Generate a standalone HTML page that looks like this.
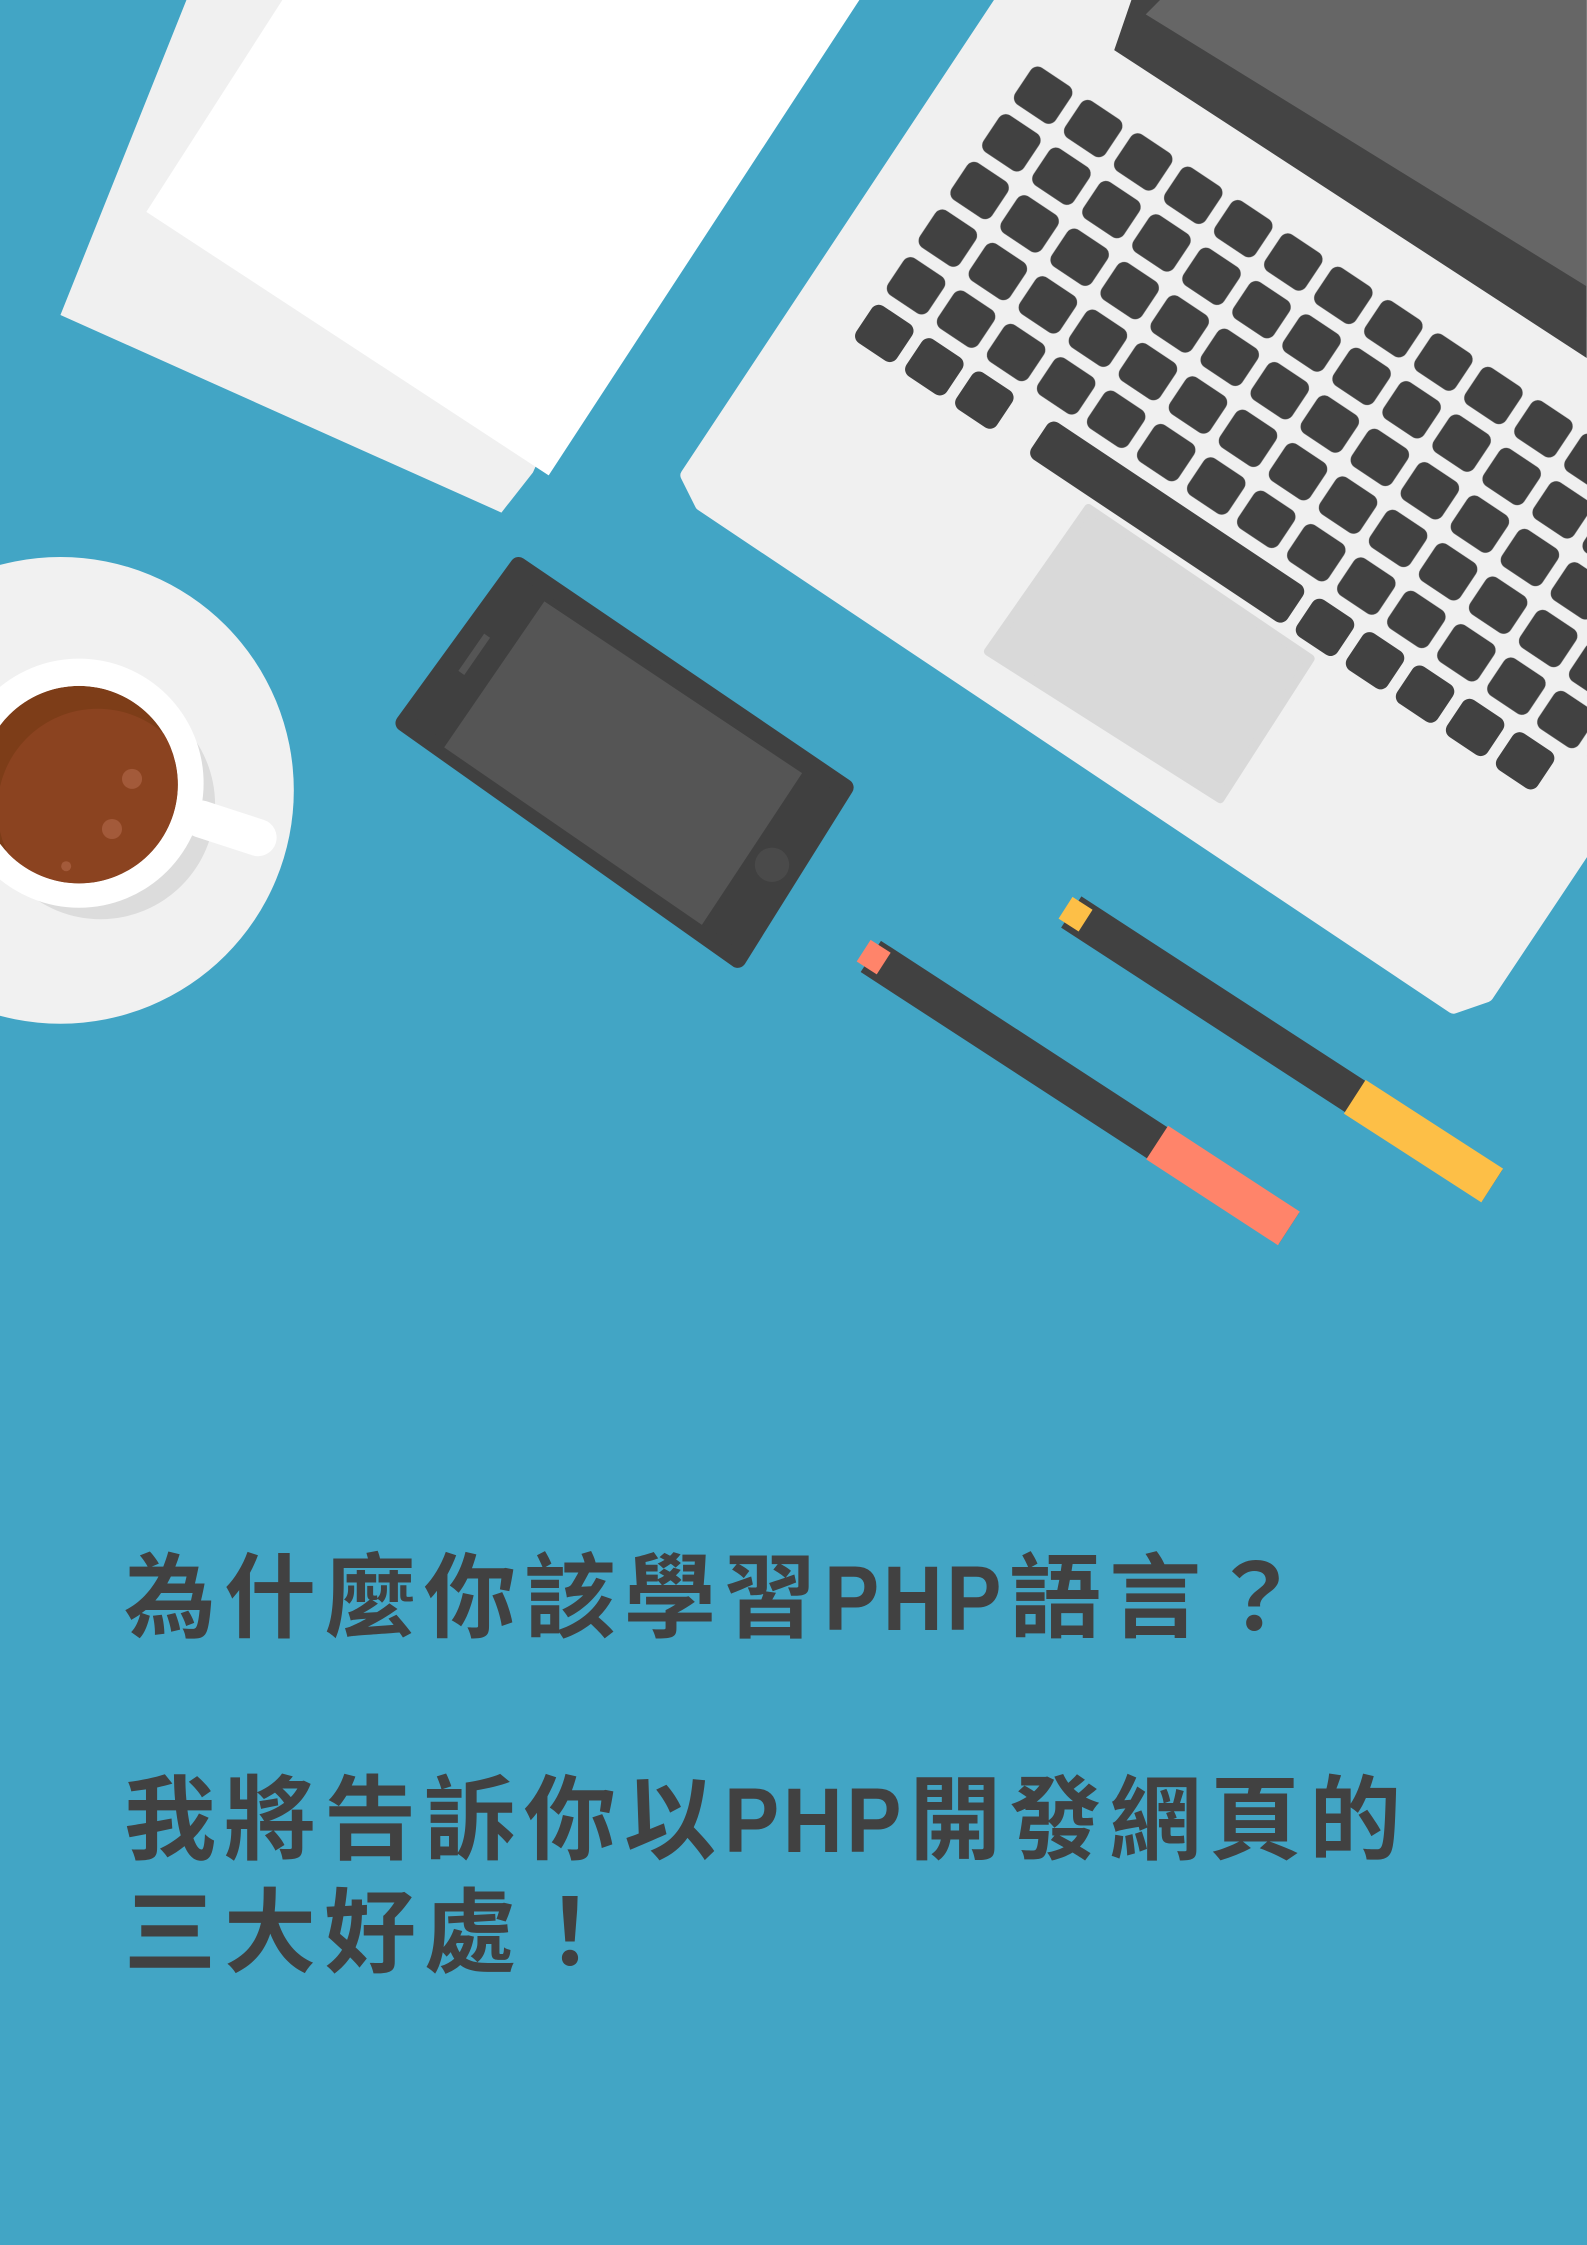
<!DOCTYPE html>
<html><head><meta charset="utf-8">
<style>
html,body{margin:0;padding:0;}
body{width:1587px;height:2245px;background:#42a5c5;position:relative;overflow:hidden;}
svg{position:absolute;left:0;top:0;}
.t{position:absolute;left:124px;color:#414141;font-family:"Liberation Sans","Noto Sans CJK TC",sans-serif;font-weight:bold;font-size:92px;line-height:113px;letter-spacing:8px;white-space:nowrap;}
.p{display:inline-block;transform:scaleX(0.9);transform-origin:left center;margin-right:-16px;letter-spacing:4px;}
</style></head><body>
<svg width="1587" height="2245" viewBox="0 0 1108 1568">
<defs>
<pattern id="k" width="42" height="40" patternUnits="userSpaceOnUse">
<rect x="3" y="3" width="34" height="31" rx="6" fill="#414141"/>
</pattern>
<clipPath id="cc"><circle cx="55" cy="548" r="69"/></clipPath>
</defs>
<polygon points="130,0 520,0 372,330 350,358 42,220" fill="#f0f0f0"/>
<polygon points="197,0 600,0 383,332 102,148" fill="#ffffff"/>
<polygon points="700,0 1108,0 1108,590 1038,695 1015,703 490,352 480,332" fill="#f0f0f0" stroke="#f0f0f0" stroke-width="10" stroke-linejoin="round"/>
<polygon points="790,0 1108,0 1108,250 778,35" fill="#444444"/>
<polygon points="810,0 1108,0 1108,200 800,10" fill="#666666"/>
<g transform="translate(722,40) rotate(33.7)">
<rect x="0" y="0" width="620" height="200" fill="url(#k)"/>
<rect x="3" y="203" width="34" height="31" rx="6" fill="#414141"/>
<rect x="45" y="203" width="34" height="31" rx="6" fill="#414141"/>
<rect x="87" y="203" width="34" height="31" rx="6" fill="#414141"/>
<rect x="150" y="203" width="215" height="31" rx="6" fill="#414141"/>
<rect x="373" y="203" width="34" height="31" rx="6" fill="#414141"/>
<rect x="415" y="203" width="34" height="31" rx="6" fill="#414141"/>
<rect x="457" y="203" width="34" height="31" rx="6" fill="#414141"/>
<rect x="499" y="203" width="34" height="31" rx="6" fill="#414141"/>
<rect x="541" y="203" width="34" height="31" rx="6" fill="#414141"/>
</g>
<polygon points="760,355 915,460 852,558 690,455" fill="#d9d9d9" stroke="#d9d9d9" stroke-width="6" stroke-linejoin="round"/>
<polygon points="362,395 590,550 515,670 282,505" fill="#404040" stroke="#404040" stroke-width="12" stroke-linejoin="round"/>
<polygon points="380,420 560,540 490,646 310,522" fill="#555555"/>
<circle cx="539" cy="604" r="12" fill="#4a4a4a"/>
<line x1="322" y1="470" x2="340" y2="444" stroke="#555" stroke-width="5"/>
<circle cx="42" cy="552" r="163" fill="#f1f1f1"/>
<circle cx="70" cy="562" r="80" fill="#dcdcdc"/>
<line x1="140" y1="572" x2="180" y2="585" stroke="#fff" stroke-width="26" stroke-linecap="round"/>
<circle cx="55" cy="547" r="87" fill="#ffffff"/>
<g clip-path="url(#cc)">
<circle cx="55" cy="548" r="69" fill="#7d3d18"/>
<circle cx="68" cy="565" r="70" fill="#8b4320"/>
</g>
<circle cx="92" cy="544" r="7" fill="#a35a3a"/>
<circle cx="78" cy="579" r="7" fill="#a35a3a"/>
<circle cx="46" cy="605" r="3.5" fill="#a35a3a"/>
<line x1="608" y1="668" x2="900" y2="858" stroke="#414141" stroke-width="26"/>
<line x1="808" y1="798" x2="900" y2="858" stroke="#ff846a" stroke-width="28"/>
<line x1="603" y1="664" x2="617" y2="673" stroke="#ff846a" stroke-width="18"/>
<line x1="748" y1="637" x2="1042" y2="828" stroke="#414141" stroke-width="26"/>
<line x1="946" y1="766" x2="1042" y2="828" stroke="#fdbf47" stroke-width="28"/>
<line x1="744" y1="634" x2="758" y2="643" stroke="#fdbf47" stroke-width="18"/>
</svg>
<div class="t" style="top:1543px;">為什麼你該學習<span class="p">PHP</span>語言？</div>
<div class="t" style="top:1765px;">我將告訴你以<span class="p">PHP</span>開發網頁的<br>三大好處！</div>
</body></html>
